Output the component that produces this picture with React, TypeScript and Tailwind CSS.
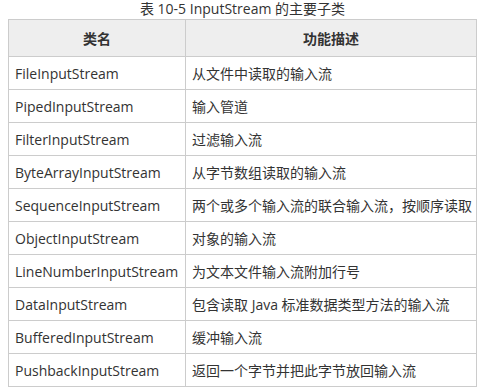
import React from 'react'

const ROWS: [string, string][] = [
  ['FileInputStream', '从文件中读取的输入流'],
  ['PipedInputStream', '输入管道'],
  ['FilterInputStream', '过滤输入流'],
  ['ByteArrayInputStream', '从字节数组读取的输入流'],
  ['SequenceInputStream', '两个或多个输入流的联合输入流，按顺序读取'],
  ['ObjectInputStream', '对象的输入流'],
  ['LineNumberInputStream', '为文本文件输入流附加行号'],
  ['DataInputStream', '包含读取 Java 标准数据类型方法的输入流'],
  ['BufferedInputStream', '缓冲输入流'],
  ['PushbackInputStream', '返回一个字节并把此字节放回输入流'],
]

export default function App() {
  return (
    <div
      className="w-[479px] h-[390px] bg-white pl-[8px] text-[#333] overflow-hidden"
      style={{ fontFamily: '"Open Sans", "Noto Sans CJK SC", sans-serif' }}
    >
      <div className="w-[469px] h-[19px] text-center text-[14px] leading-[17px]">
        表 10-5 InputStream 的主要子类
      </div>
      <table className="w-[469px] border-collapse table-fixed text-[14px]">
        <colgroup>
          <col className="w-[177px]" />
          <col />
        </colgroup>
        <thead>
          <tr className="h-[37px] bg-[#eeeeee]">
            <th className="border border-[#cccccc] font-bold text-center">类名</th>
            <th className="border border-[#cccccc] font-bold text-center">功能描述</th>
          </tr>
        </thead>
        <tbody>
          {ROWS.map(([name, desc]) => (
            <tr key={name} className="h-[33px]">
              <td className="border border-[#cccccc] px-[6px] whitespace-nowrap">{name}</td>
              <td className="border border-[#cccccc] px-[6px] whitespace-nowrap">{desc}</td>
            </tr>
          ))}
        </tbody>
      </table>
    </div>
  )
}
